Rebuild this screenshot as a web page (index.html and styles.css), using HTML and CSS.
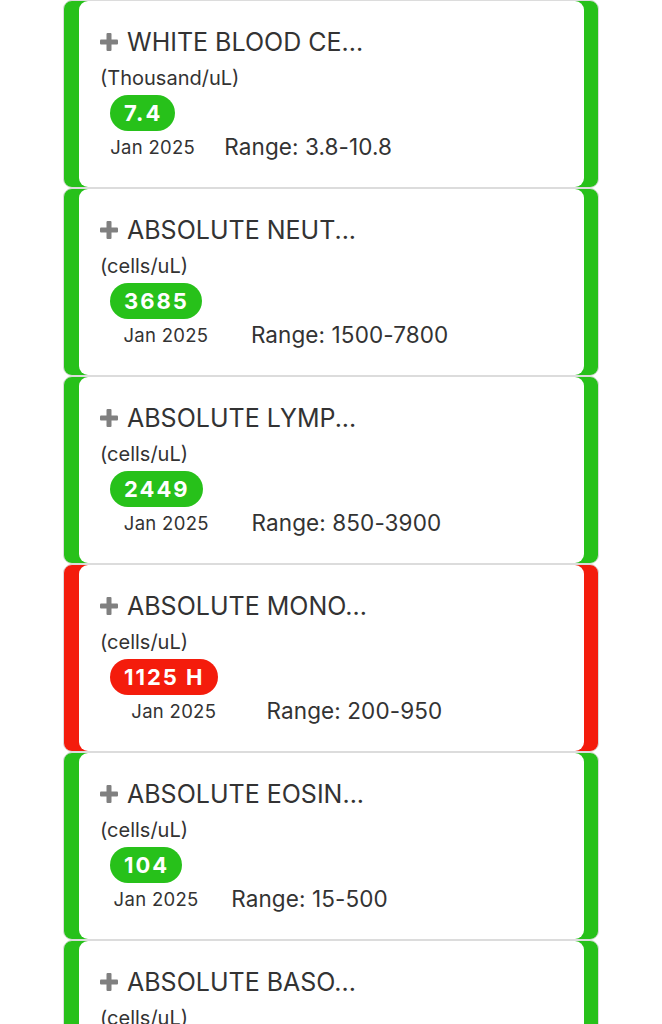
FILE: index.html
```html
<!DOCTYPE html>
<html>
<head>
<meta charset="utf-8">
<link rel="stylesheet" href="styles.css">
</head>
<body>
<div class="list">
  <div class="card ok">
    <div class="inner">
      <div class="title"><svg class="plus" viewBox="0 0 18 18"><rect x="6.5" y="0" width="5" height="18" rx="1"/><rect x="0" y="6.5" width="18" height="5" rx="1"/></svg><span>WHITE BLOOD CE...</span></div>
      <div class="unit">(Thousand/uL)</div>
      <div class="row">
        <div class="col"><span class="badge">7.4</span><span class="date">Jan 2025</span></div>
        <span class="range">Range: 3.8-10.8</span>
      </div>
    </div>
  </div>
  <div class="card ok">
    <div class="inner">
      <div class="title"><svg class="plus" viewBox="0 0 18 18"><rect x="6.5" y="0" width="5" height="18" rx="1"/><rect x="0" y="6.5" width="18" height="5" rx="1"/></svg><span>ABSOLUTE NEUT...</span></div>
      <div class="unit">(cells/uL)</div>
      <div class="row">
        <div class="col"><span class="badge">3685</span><span class="date">Jan 2025</span></div>
        <span class="range">Range: 1500-7800</span>
      </div>
    </div>
  </div>
  <div class="card ok">
    <div class="inner">
      <div class="title"><svg class="plus" viewBox="0 0 18 18"><rect x="6.5" y="0" width="5" height="18" rx="1"/><rect x="0" y="6.5" width="18" height="5" rx="1"/></svg><span>ABSOLUTE LYMP...</span></div>
      <div class="unit">(cells/uL)</div>
      <div class="row">
        <div class="col"><span class="badge">2449</span><span class="date">Jan 2025</span></div>
        <span class="range">Range: 850-3900</span>
      </div>
    </div>
  </div>
  <div class="card high">
    <div class="inner">
      <div class="title"><svg class="plus" viewBox="0 0 18 18"><rect x="6.5" y="0" width="5" height="18" rx="1"/><rect x="0" y="6.5" width="18" height="5" rx="1"/></svg><span>ABSOLUTE MONO...</span></div>
      <div class="unit">(cells/uL)</div>
      <div class="row">
        <div class="col"><span class="badge">1125 H</span><span class="date">Jan 2025</span></div>
        <span class="range">Range: 200-950</span>
      </div>
    </div>
  </div>
  <div class="card ok">
    <div class="inner">
      <div class="title"><svg class="plus" viewBox="0 0 18 18"><rect x="6.5" y="0" width="5" height="18" rx="1"/><rect x="0" y="6.5" width="18" height="5" rx="1"/></svg><span>ABSOLUTE EOSIN...</span></div>
      <div class="unit">(cells/uL)</div>
      <div class="row">
        <div class="col"><span class="badge">104</span><span class="date">Jan 2025</span></div>
        <span class="range">Range: 15-500</span>
      </div>
    </div>
  </div>
  <div class="card ok">
    <div class="inner">
      <div class="title"><svg class="plus" viewBox="0 0 18 18"><rect x="6.5" y="0" width="5" height="18" rx="1"/><rect x="0" y="6.5" width="18" height="5" rx="1"/></svg><span>ABSOLUTE BASO...</span></div>
      <div class="unit">(cells/uL)</div>
      <div class="row">
        <div class="col"><span class="badge">36</span><span class="date">Jan 2025</span></div>
        <span class="range">Range: 0-200</span>
      </div>
    </div>
  </div>
</div>
</body>
</html>
```
FILE: styles.css
```css
html, body {
  margin: 0;
  padding: 0;
  background: #ffffff;
}
body {
  font-family: Inter, "Noto Sans", sans-serif;
  color: #333333;
  overflow: hidden;
}
.list {
  width: 536px;
  margin: 0 auto;
  display: flex;
  flex-direction: column;
}
.card {
  box-sizing: border-box;
  height: 188px;
  border: 1px solid #dcdcdc;
  border-radius: 9px;
  padding: 0 14px 0 15px;
  display: flex;
}
.card.ok { background: #27c11a; }
.card.high { background: #f41c0c; }
.inner {
  flex: 1;
  background: #ffffff;
  border-radius: 9px;
  padding: 26px 0 0 21px;
  display: flex;
  flex-direction: column;
}
.title {
  display: flex;
  align-items: center;
  height: 30px;
  font-size: 25px;
  color: #333;
  white-space: nowrap;
}
.plus {
  width: 18px;
  height: 18px;
  fill: #808080;
  margin-right: 9px;
  flex: none;
}
.unit {
  margin-top: 10px;
  height: 22px;
  line-height: 22px;
  font-size: 20px;
  color: #333;
}
.row {
  margin-top: 6px;
  margin-left: 10px;
  display: flex;
  align-items: flex-end;
  gap: 29px;
}
.col {
  display: flex;
  flex-direction: column;
  align-items: center;
}
.badge {
  box-sizing: border-box;
  height: 36px;
  line-height: 36px;
  padding: 0 13px 0 14px;
  margin-right: 20px;
  border-radius: 18px;
  font-size: 22px;
  font-weight: 700;
  letter-spacing: 2px;
  color: #ffffff;
}
.ok .badge { background: #27c11a; }
.high .badge { background: #f41c0c; }
.date {
  margin-top: 4px;
  height: 24px;
  line-height: 24px;
  font-size: 18.5px;
  letter-spacing: 0.3px;
}
.range {
  height: 24px;
  line-height: 24px;
  font-size: 22.5px;
  letter-spacing: 0.1px;
}
```
